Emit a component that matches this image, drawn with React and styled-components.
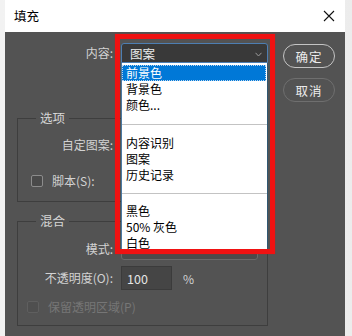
import React from "react";
import styled, { createGlobalStyle } from "styled-components";

const Global = createGlobalStyle`
  html, body { margin: 0; padding: 0; }
  body {
    background: linear-gradient(90deg, #f2f2f2 0%, #f7f7f7 50%, #ececec 100%);
    font-family: "Noto Sans CJK SC", "Noto Sans", sans-serif;
    font-size: 12px;
  }
  * { box-sizing: border-box; }
`;

const Page = styled.div`
  width: 352px;
  height: 336px;
  overflow: hidden;
  padding-left: 5px;
`;

const Dialog = styled.div`
  width: 340px;
  height: 336px;
  display: flex;
  flex-direction: column;
`;

const TitleBar = styled.div`
  height: 32px;
  background: #ffffff;
  display: flex;
  align-items: center;
  justify-content: space-between;
  padding: 0 9px 0 9px;
  flex: none;
`;

const Title = styled.div`
  font-size: 12.5px;
  color: #000;
  line-height: 16px;
`;

const Close = styled.div`
  width: 12px;
  height: 12px;
  display: flex;
  margin-right: 1px;
`;

const Body = styled.div`
  flex: 1;
  background: #535353;
  display: flex;
  padding-top: 11px;
`;

const Main = styled.div`
  width: 263px;
  display: flex;
  flex-direction: column;
`;

const Row = styled.div`
  display: grid;
  grid-template-columns: ${(p) => p.$label}px auto;
  column-gap: 8px;
  align-items: center;
  height: ${(p) => p.$h || 20}px;
  margin-top: ${(p) => p.$mt || 0}px;
`;

const Label = styled.div`
  text-align: right;
  color: #d2d2d2;
  line-height: 16px;
  white-space: nowrap;
`;

const SelectWrap = styled.div`
  position: relative;
  width: 147px;
  height: 20px;
`;

const SelectBox = styled.div`
  height: 20px;
  width: 147px;
  background: #393939;
  border: 1px solid #4d7eb2;
  border-radius: 3px 3px 0 0;
  display: flex;
  align-items: center;
  justify-content: space-between;
  padding: 0 5px 0 8px;
  color: #ececec;
  font-size: 12.5px;
`;

const Chevron = styled.svg`
  width: 7px;
  height: 5px;
  margin-top: 3px;
`;

const List = styled.div`
  position: absolute;
  left: 0;
  top: 20px;
  width: 147px;
  height: 188px;
  background: #ffffff;
  border-left: 1px solid #4b7aa3;
  border-right: 1px solid #2f5873;
  padding-top: 2px;
  z-index: 2;
`;

const Item = styled.div`
  height: 16px;
  line-height: 16px;
  padding-left: 4px;
  color: ${(p) => (p.$active ? "#ffffff" : "#000000")};
  background: ${(p) => (p.$active ? "#0078d7" : "transparent")};
  outline: ${(p) => (p.$active ? "1px dotted #b9d6f2" : "none")};
  outline-offset: -1px;
  margin: 0 1px 0 0;
  white-space: nowrap;
`;

const Sep = styled.div`
  height: ${(p) => p.$h}px;
  display: flex;
  align-items: center;
  &::after {
    content: "";
    display: block;
    width: 100%;
    height: 1px;
    background: #c3c3c3;
  }
`;

const Highlight = styled.div`
  position: absolute;
  left: -6px;
  top: -9px;
  width: 160px;
  height: 220px;
  border: 5px solid #f01212;
  box-shadow: 0 0 1px rgba(240, 18, 18, 0.6);
  pointer-events: none;
  z-index: 3;
`;

const Group = styled.fieldset`
  margin: ${(p) => p.$mt}px 0 0 12px;
  width: 251px;
  border: 1px solid #3e3e3e;
  padding: 0 0 10px 0;
  min-width: 0;
`;

const Legend = styled.legend`
  margin-left: 18px;
  padding: 0 4px;
  color: #d6d6d6;
  line-height: 16px;
  font-size: 12.5px;
`;

const CheckRow = styled.label`
  display: flex;
  align-items: center;
  gap: 9px;
  height: ${(p) => p.$h || 20}px;
  margin-top: ${(p) => p.$mt || 0}px;
  padding-left: ${(p) => p.$pl}px;
  color: ${(p) => (p.$disabled ? "#767676" : "#d2d2d2")};
  line-height: 16px;
`;

const Box = styled.span`
  width: 12px;
  height: 12px;
  border-radius: 2px;
  border: 1px solid ${(p) => (p.$disabled ? "#5f5f5f" : "#8c8c8c")};
  background: ${(p) => (p.$disabled ? "#4f4f4f" : "#4a4a4a")};
  flex: none;
`;

const ModeSelect = styled.div`
  width: 137px;
  height: 22px;
  border: 1px solid #6a6a6a;
  border-radius: 3px;
  background: #4b4b4b;
`;

const InputLine = styled.div`
  display: flex;
  align-items: center;
  gap: 11px;
`;

const Input = styled.div`
  width: 51px;
  height: 24px;
  background: #454545;
  border: 1px solid #3b3b3b;
  color: #e6e6e6;
  display: flex;
  align-items: center;
  padding-left: 5px;
  font-size: 12.5px;
`;

const Unit = styled.div`
  color: #d2d2d2;
`;

const Buttons = styled.div`
  margin-left: 15px;
  margin-top: 1px;
  display: flex;
  flex-direction: column;
  gap: 10px;
`;

const Button = styled.div`
  width: 52px;
  height: 24px;
  border-radius: 12px;
  border: 1.5px solid ${(p) => (p.$primary ? "#c4c4c4" : "#6f6f6f")};
  color: #ececec;
  display: flex;
  align-items: center;
  justify-content: center;
  font-size: 12.5px;
  letter-spacing: 1px;
`;

const items1 = ["前景色", "背景色", "颜色..."];
const items2 = ["内容识别", "图案", "历史记录"];
const items3 = ["黑色", "50% 灰色", "白色"];

export default function App() {
  return (
    <>
      <Global />
      <Page>
        <Dialog>
          <TitleBar>
            <Title>填充</Title>
            <Close>
              <svg width="12" height="12" viewBox="0 0 12 12">
                <path d="M1 1 L11 11 M11 1 L1 11" stroke="#111" strokeWidth="1.1" fill="none" />
              </svg>
            </Close>
          </TitleBar>
          <Body>
            <Main>
              <Row $label={108}>
                <Label>内容:</Label>
                <SelectWrap>
                  <SelectBox>
                    <span>图案</span>
                    <Chevron viewBox="0 0 7 5">
                      <path d="M0.5 0.8 L3.5 4 L6.5 0.8" stroke="#9a9a9a" strokeWidth="1" fill="none" />
                    </Chevron>
                  </SelectBox>
                  <List>
                    {items1.map((t, i) => (
                      <Item key={t} $active={i === 0}>{t}</Item>
                    ))}
                    <Sep $h={22} />
                    {items2.map((t) => (
                      <Item key={t}>{t}</Item>
                    ))}
                    <Sep $h={20} />
                    {items3.map((t) => (
                      <Item key={t}>{t}</Item>
                    ))}
                  </List>
                  <Highlight />
                </SelectWrap>
              </Row>

              <Group $mt={47}>
                <Legend>选项</Legend>
                <Row $label={95} $mt={9}>
                  <Label>自定图案:</Label>
                  <div />
                </Row>
                <CheckRow $pl={13} $mt={16}>
                  <Box />
                  <span>脚本(S):</span>
                </CheckRow>
              </Group>

              <Group $mt={11}>
                <Legend>混合</Legend>
                <Row $label={95} $h={22} $mt={9}>
                  <Label>模式:</Label>
                  <ModeSelect />
                </Row>
                <Row $label={95} $h={24} $mt={6}>
                  <Label>不透明度(O):</Label>
                  <InputLine>
                    <Input>100</Input>
                    <Unit>%</Unit>
                  </InputLine>
                </Row>
                <CheckRow $pl={9} $h={16} $mt={9} $disabled>
                  <Box $disabled />
                  <span>保留透明区域(P)</span>
                </CheckRow>
              </Group>
            </Main>
            <Buttons>
              <Button $primary>确定</Button>
              <Button>取消</Button>
            </Buttons>
          </Body>
        </Dialog>
      </Page>
    </>
  );
}
